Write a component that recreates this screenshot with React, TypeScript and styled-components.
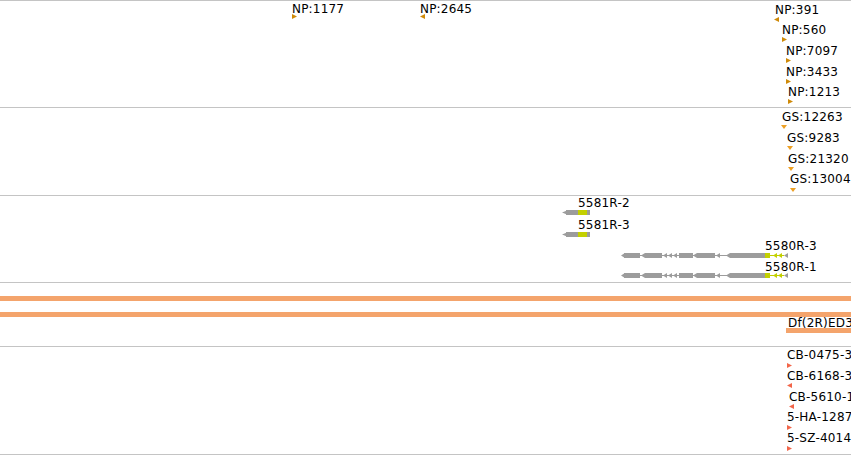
import React from "react";
import styled, { createGlobalStyle } from "styled-components";

const GlobalStyle = createGlobalStyle`
  html, body {
    margin: 0;
    padding: 0;
    background: #ffffff;
    overflow: hidden;
  }
  #root {
    width: 851px;
    height: 455px;
    overflow: hidden;
  }
`;

const Browser = styled.div`
  display: flex;
  flex-direction: column;
  width: 851px;
  height: 455px;
  border-bottom: 1px solid #c4c4c4;
  box-sizing: border-box;
  overflow: hidden;
  font-family: "DejaVu Sans", Verdana, sans-serif;
`;

const Track = styled.div<{ $height: number }>`
  position: relative;
  flex: 0 0 ${(p) => p.$height}px;
  height: ${(p) => p.$height}px;
  box-sizing: border-box;
  border-top: 1px solid #c4c4c4;
  overflow: hidden;
`;

const Placed = styled.div.attrs<{ $x: number; $y: number }>((p) => ({
  style: { left: p.$x, top: p.$y },
}))<{ $x: number; $y: number }>`
  position: absolute;
  line-height: 0;
`;

const Label = styled.div.attrs<{ $x: number; $y: number }>((p) => ({
  style: { left: p.$x, top: p.$y },
}))<{ $x: number; $y: number }>`
  position: absolute;
  font-size: 12px;
  line-height: 14px;
  letter-spacing: 0.2px;
  color: #000;
  white-space: nowrap;
`;

const SpanBar = styled.div.attrs<{ $y: number; $x?: number }>((p) => ({
  style: { top: p.$y, left: p.$x ?? 0 },
}))<{ $y: number; $x?: number }>`
  position: absolute;
  right: 0;
  height: 5px;
  background: #f4a46c;
`;

type Dir = "left" | "right" | "down";

const Marker: React.FC<{ dir: Dir; color: string }> = ({ dir, color }) => {
  if (dir === "down") {
    return (
      <svg width="6" height="4" viewBox="0 0 6 4">
        <polygon points="0,0 6,0 3,4" fill={color} />
      </svg>
    );
  }
  return (
    <svg width="5" height="5" viewBox="0 0 5 5">
      <polygon
        points={dir === "right" ? "0,0 5,2.5 0,5" : "5,0 0,2.5 5,5"}
        fill={color}
      />
    </svg>
  );
};

type Point = { label: string; lx: number; ly: number; gx: number; gy: number; dir: Dir };

const NP_COLOR = "#cf8a08";
const GS_COLOR = "#eda024";
const RED_COLOR = "#f2664a";
const GENE_GRAY = "#9c9c9c";
const CDS_YELLOW = "#c3d000";

const npFeatures: Point[] = [
  { label: "NP:1177", lx: 292, ly: 1, gx: 292, gy: 13, dir: "right" },
  { label: "NP:2645", lx: 420, ly: 1, gx: 420, gy: 13, dir: "left" },
  { label: "NP:391", lx: 775, ly: 2, gx: 774, gy: 16, dir: "left" },
  { label: "NP:560", lx: 782, ly: 22, gx: 782, gy: 36, dir: "right" },
  { label: "NP:7097", lx: 786, ly: 43, gx: 786, gy: 57, dir: "right" },
  { label: "NP:3433", lx: 786, ly: 64, gx: 786, gy: 78, dir: "right" },
  { label: "NP:1213", lx: 788, ly: 84, gx: 788, gy: 98, dir: "right" },
];

const gsFeatures: Point[] = [
  { label: "GS:12263", lx: 782, ly: 2, gx: 781, gy: 16, dir: "down" },
  { label: "GS:9283", lx: 787, ly: 23, gx: 787, gy: 37, dir: "down" },
  { label: "GS:21320", lx: 788, ly: 44, gx: 788, gy: 58, dir: "down" },
  { label: "GS:13004", lx: 790, ly: 64, gx: 790, gy: 79, dir: "down" },
];

const redFeatures: Point[] = [
  { label: "CB-0475-3", lx: 787, ly: 1, gx: 787, gy: 16, dir: "right" },
  { label: "CB-6168-3", lx: 787, ly: 22, gx: 787, gy: 36, dir: "left" },
  { label: "CB-5610-1", lx: 789, ly: 43, gx: 789, gy: 57, dir: "left" },
  { label: "5-HA-1287", lx: 787, ly: 63, gx: 787, gy: 78, dir: "right" },
  { label: "5-SZ-4014", lx: 787, ly: 84, gx: 787, gy: 99, dir: "right" },
];

const PointTrack: React.FC<{ height: number; items: Point[]; color: string }> = ({
  height,
  items,
  color,
}) => (
  <Track $height={height}>
    {items.map((f) => (
      <React.Fragment key={f.label}>
        <Label $x={f.lx} $y={f.ly}>{f.label}</Label>
        <Placed $x={f.gx} $y={f.gy}>
          <Marker dir={f.dir} color={color} />
        </Placed>
      </React.Fragment>
    ))}
  </Track>
);

const ShortTranscript: React.FC = () => (
  <svg width="28" height="5" viewBox="0 0 28 5">
    <polygon points="0,2.5 5,0.5 5,4.5" fill={GENE_GRAY} />
    <rect x="4" y="0" width="12" height="5" fill={GENE_GRAY} />
    <rect x="16" y="0" width="9" height="5" fill={CDS_YELLOW} />
    <rect x="25" y="0" width="3" height="5" fill={GENE_GRAY} />
  </svg>
);

const chevron = (x: number, color: string, key: string) => (
  <polygon key={key} points={`${x},2.5 ${x + 4},0 ${x + 4},5`} fill={color} />
);

const LongTranscript: React.FC = () => {
  const o = 621;
  const exons: [number, number][] = [
    [624, 640],
    [645, 662],
    [679, 693],
    [697, 715],
    [730, 765],
  ];
  const grayChevrons = [621, 641, 663, 668, 673, 693, 716, 726, 784];
  const yellowChevrons = [773, 778];
  return (
    <svg width="168" height="5" viewBox="0 0 168 5">
      <line x1="1" y1="2.5" x2="149" y2="2.5" stroke={GENE_GRAY} strokeWidth="1" />
      <line x1="149" y1="2.5" x2="163" y2="2.5" stroke={CDS_YELLOW} strokeWidth="1" />
      {exons.map(([a, b]) => (
        <rect key={a} x={a - o} y="0" width={b - a} height="5" fill={GENE_GRAY} />
      ))}
      <rect x={765 - o} y="0" width="5" height="5" fill={CDS_YELLOW} />
      {grayChevrons.map((x) => chevron(x - o, GENE_GRAY, `g${x}`))}
      {yellowChevrons.map((x) => chevron(x - o, CDS_YELLOW, `y${x}`))}
    </svg>
  );
};

const genes = [
  { label: "5581R-2", lx: 578, ly: 0, gx: 562, gy: 14, long: false },
  { label: "5581R-3", lx: 578, ly: 22, gx: 562, gy: 36, long: false },
  { label: "5580R-3", lx: 765, ly: 43, gx: 621, gy: 57, long: true },
  { label: "5580R-1", lx: 765, ly: 64, gx: 621, gy: 77, long: true },
];

export default function App() {
  return (
    <>
      <GlobalStyle />
      <Browser>
        <PointTrack height={107} items={npFeatures} color={NP_COLOR} />
        <PointTrack height={88} items={gsFeatures} color={GS_COLOR} />
        <Track $height={87}>
          {genes.map((g) => (
            <React.Fragment key={g.label}>
              <Label $x={g.lx} $y={g.ly}>{g.label}</Label>
              <Placed $x={g.gx} $y={g.gy}>
                {g.long ? <LongTranscript /> : <ShortTranscript />}
              </Placed>
            </React.Fragment>
          ))}
        </Track>
        <Track $height={64}>
          <SpanBar $y={13} />
          <SpanBar $y={29} />
          <Label $x={788} $y={33}>Df(2R)ED3610</Label>
          <SpanBar $x={786} $y={45} />
        </Track>
        <PointTrack height={108} items={redFeatures} color={RED_COLOR} />
      </Browser>
    </>
  );
}
